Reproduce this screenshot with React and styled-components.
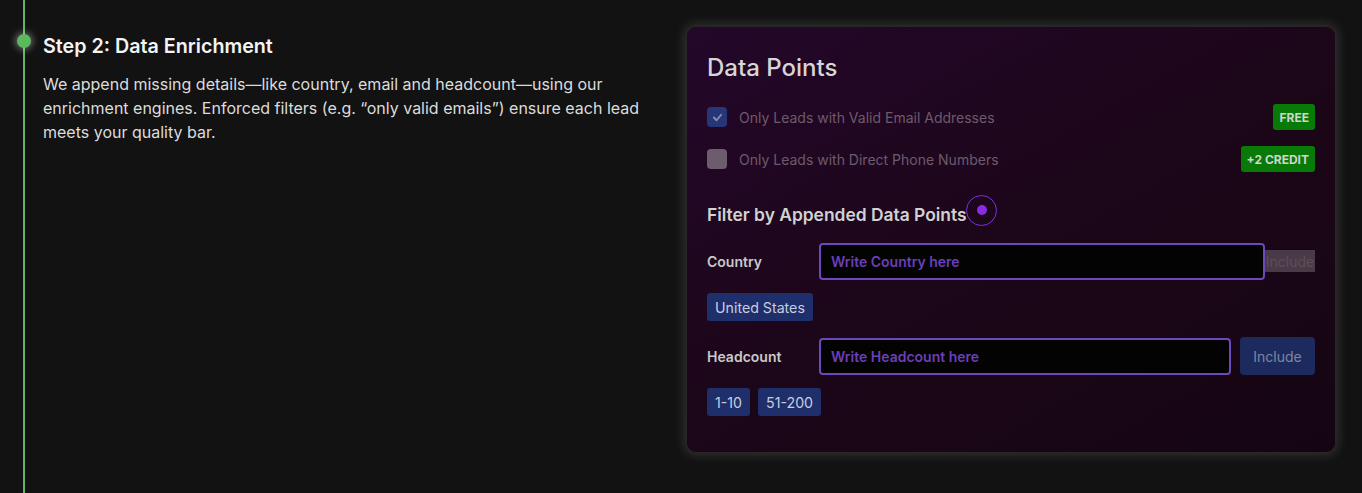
import React from "react";
import styled, { createGlobalStyle } from "styled-components";

const GlobalStyle = createGlobalStyle`
    html, body {
        margin: 0;
        padding: 0;
        background: #121212;
        font-family: Inter, "Noto Sans", "Liberation Sans", sans-serif;
    }
    * {
        box-sizing: border-box;
    }
`;

const Page = styled.div`
    padding-left: 23px;
    min-height: 100vh;
`;

const Step = styled.section`
    position: relative;
    min-height: 100vh;
    border-left: 2px solid #5cb85c;
    padding: 27px 27px 0 18px;
    display: flex;
    align-items: flex-start;
`;

const Dot = styled.span`
    position: absolute;
    left: -8px;
    top: 34px;
    width: 14px;
    height: 14px;
    border-radius: 50%;
    background: #5cb85c;
    box-shadow: 0 0 7px 2px rgba(255, 255, 255, 0.35);
`;

const Intro = styled.div`
    width: 610px;
    padding-top: 7px;
`;

const StepTitle = styled.h3`
    margin: 0 0 14px;
    font-size: 19.7px;
    line-height: 24px;
    font-weight: 600;
    color: #f4f4f4;
`;

const StepText = styled.p`
    margin: 0;
    font-size: 16px;
    line-height: 24px;
    color: #dcdcdc;
`;

const Card = styled.div`
    margin-left: auto;
    width: 648px;
    padding: 26px 20px 36px;
    border-radius: 9px;
    background: linear-gradient(150deg, #24072a 0%, #1c0619 50%, #150512 100%);
    box-shadow: 0 0 11px 3px rgba(200, 200, 200, 0.18);
`;

const CardTitle = styled.h2`
    margin: 0 0 22px;
    font-size: 24px;
    line-height: 29px;
    font-weight: 500;
    color: #d6d6d6;
`;

const OptionList = styled.div`
    display: flex;
    flex-direction: column;
    gap: 16px;
`;

const Option = styled.label`
    display: flex;
    align-items: center;
    height: 26px;
    gap: 12px;
    font-size: 14px;
    color: #6e5a6c;
`;

const Box = styled.span`
    width: 20px;
    height: 20px;
    border-radius: 4px;
    display: flex;
    align-items: center;
    justify-content: center;
    background: ${(p) => (p.checked ? "#263679" : "#6d5c6b")};
`;

const Badge = styled.span`
    margin-left: auto;
    height: 26px;
    padding: 0 6px;
    display: flex;
    align-items: center;
    border-radius: 3px;
    background: #077a07;
    color: #cdd6cd;
    font-size: 12px;
    font-weight: 700;
`;

const FilterHeading = styled.div`
    margin: 23px 0 17px;
    display: flex;
    align-items: center;
    height: 30px;
    font-size: 17.4px;
    font-weight: 600;
    color: #d2d2d2;
`;

const HeadingText = styled.span`
    padding-top: 9px;
`;

const Radio = styled.span`
    width: 31px;
    height: 31px;
    border-radius: 50%;
    border: 1.5px solid #7a2fe0;
    display: flex;
    align-items: center;
    justify-content: center;

    &::after {
        content: "";
        width: 10px;
        height: 10px;
        border-radius: 50%;
        background: #8a2be2;
    }
`;

const FieldRow = styled.div`
    display: flex;
    align-items: center;
    height: 38px;
`;

const FieldLabel = styled.span`
    width: 112px;
    flex-shrink: 0;
    font-size: 14px;
    font-weight: 600;
    color: #c9c9c9;
`;

const Input = styled.input`
    flex: 1;
    min-width: 0;
    height: 37px;
    padding: 0 10px;
    background: #030303;
    border: 2px solid #6c48bd;
    border-radius: 4px;
    outline: none;
    font-family: inherit;
    font-size: 14px;
    font-weight: 600;
    color: #ddd;

    &::placeholder {
        color: #6a3fb8;
    }
`;

const IncludeButton = styled.button`
    flex-shrink: 0;
    font-family: inherit;
    font-size: 14px;
    border: none;
    width: ${(p) => (p.squeezed ? "50px" : "75px")};
    height: ${(p) => (p.squeezed ? "22px" : "38px")};
    margin-left: ${(p) => (p.squeezed ? "0" : "9px")};
    padding: 0;
    overflow: hidden;
    white-space: nowrap;
    border-radius: ${(p) => (p.squeezed ? "0" : "4px")};
    background: ${(p) => (p.squeezed ? "#4a3a48" : "#1d2a5d")};
    color: ${(p) => (p.squeezed ? "#5d4d5b" : "#7f86a2")};
`;

const Chips = styled.div`
    display: flex;
    gap: 8px;
    margin: 13px 0 16px;

    &:last-child {
        margin-bottom: 0;
    }
`;

const Chip = styled.span`
    height: 28px;
    padding: 0 8px;
    display: flex;
    align-items: center;
    border-radius: 3px;
    background: #1e2f6b;
    color: #c8cde0;
    font-size: 14.2px;
`;

const Check = () => (
    <svg width="11" height="11" viewBox="0 0 24 24" fill="none" stroke="#8a8fa8" strokeWidth="4" strokeLinecap="round" strokeLinejoin="round">
        <polyline points="4 12 10 18 20 6" />
    </svg>
);

const App = () => {
    const options = [
        { label: "Only Leads with Valid Email Addresses", badge: "FREE", checked: true },
        { label: "Only Leads with Direct Phone Numbers", badge: "+2 CREDIT", checked: false },
    ];

    return (
        <>
            <GlobalStyle />
            <Page>
                <Step>
                    <Dot />
                    <Intro>
                        <StepTitle>Step 2: Data Enrichment</StepTitle>
                        <StepText>
                            We append missing details—like country, email and headcount—using our
                            enrichment engines. Enforced filters (e.g. “only valid emails”) ensure each lead
                            meets your quality bar.
                        </StepText>
                    </Intro>
                    <Card>
                        <CardTitle>Data Points</CardTitle>
                        <OptionList>
                            {options.map((o) => (
                                <Option key={o.label}>
                                    <Box checked={o.checked}>{o.checked && <Check />}</Box>
                                    {o.label}
                                    <Badge>{o.badge}</Badge>
                                </Option>
                            ))}
                        </OptionList>
                        <FilterHeading>
                            <HeadingText>Filter by Appended Data Points</HeadingText>
                            <Radio />
                        </FilterHeading>
                        <FieldRow>
                            <FieldLabel>Country</FieldLabel>
                            <Input placeholder="Write Country here" />
                            <IncludeButton squeezed>Include</IncludeButton>
                        </FieldRow>
                        <Chips>
                            <Chip>United States</Chip>
                        </Chips>
                        <FieldRow>
                            <FieldLabel>Headcount</FieldLabel>
                            <Input placeholder="Write Headcount here" />
                            <IncludeButton>Include</IncludeButton>
                        </FieldRow>
                        <Chips>
                            <Chip>1-10</Chip>
                            <Chip>51-200</Chip>
                        </Chips>
                    </Card>
                </Step>
            </Page>
        </>
    );
};

export default App;
